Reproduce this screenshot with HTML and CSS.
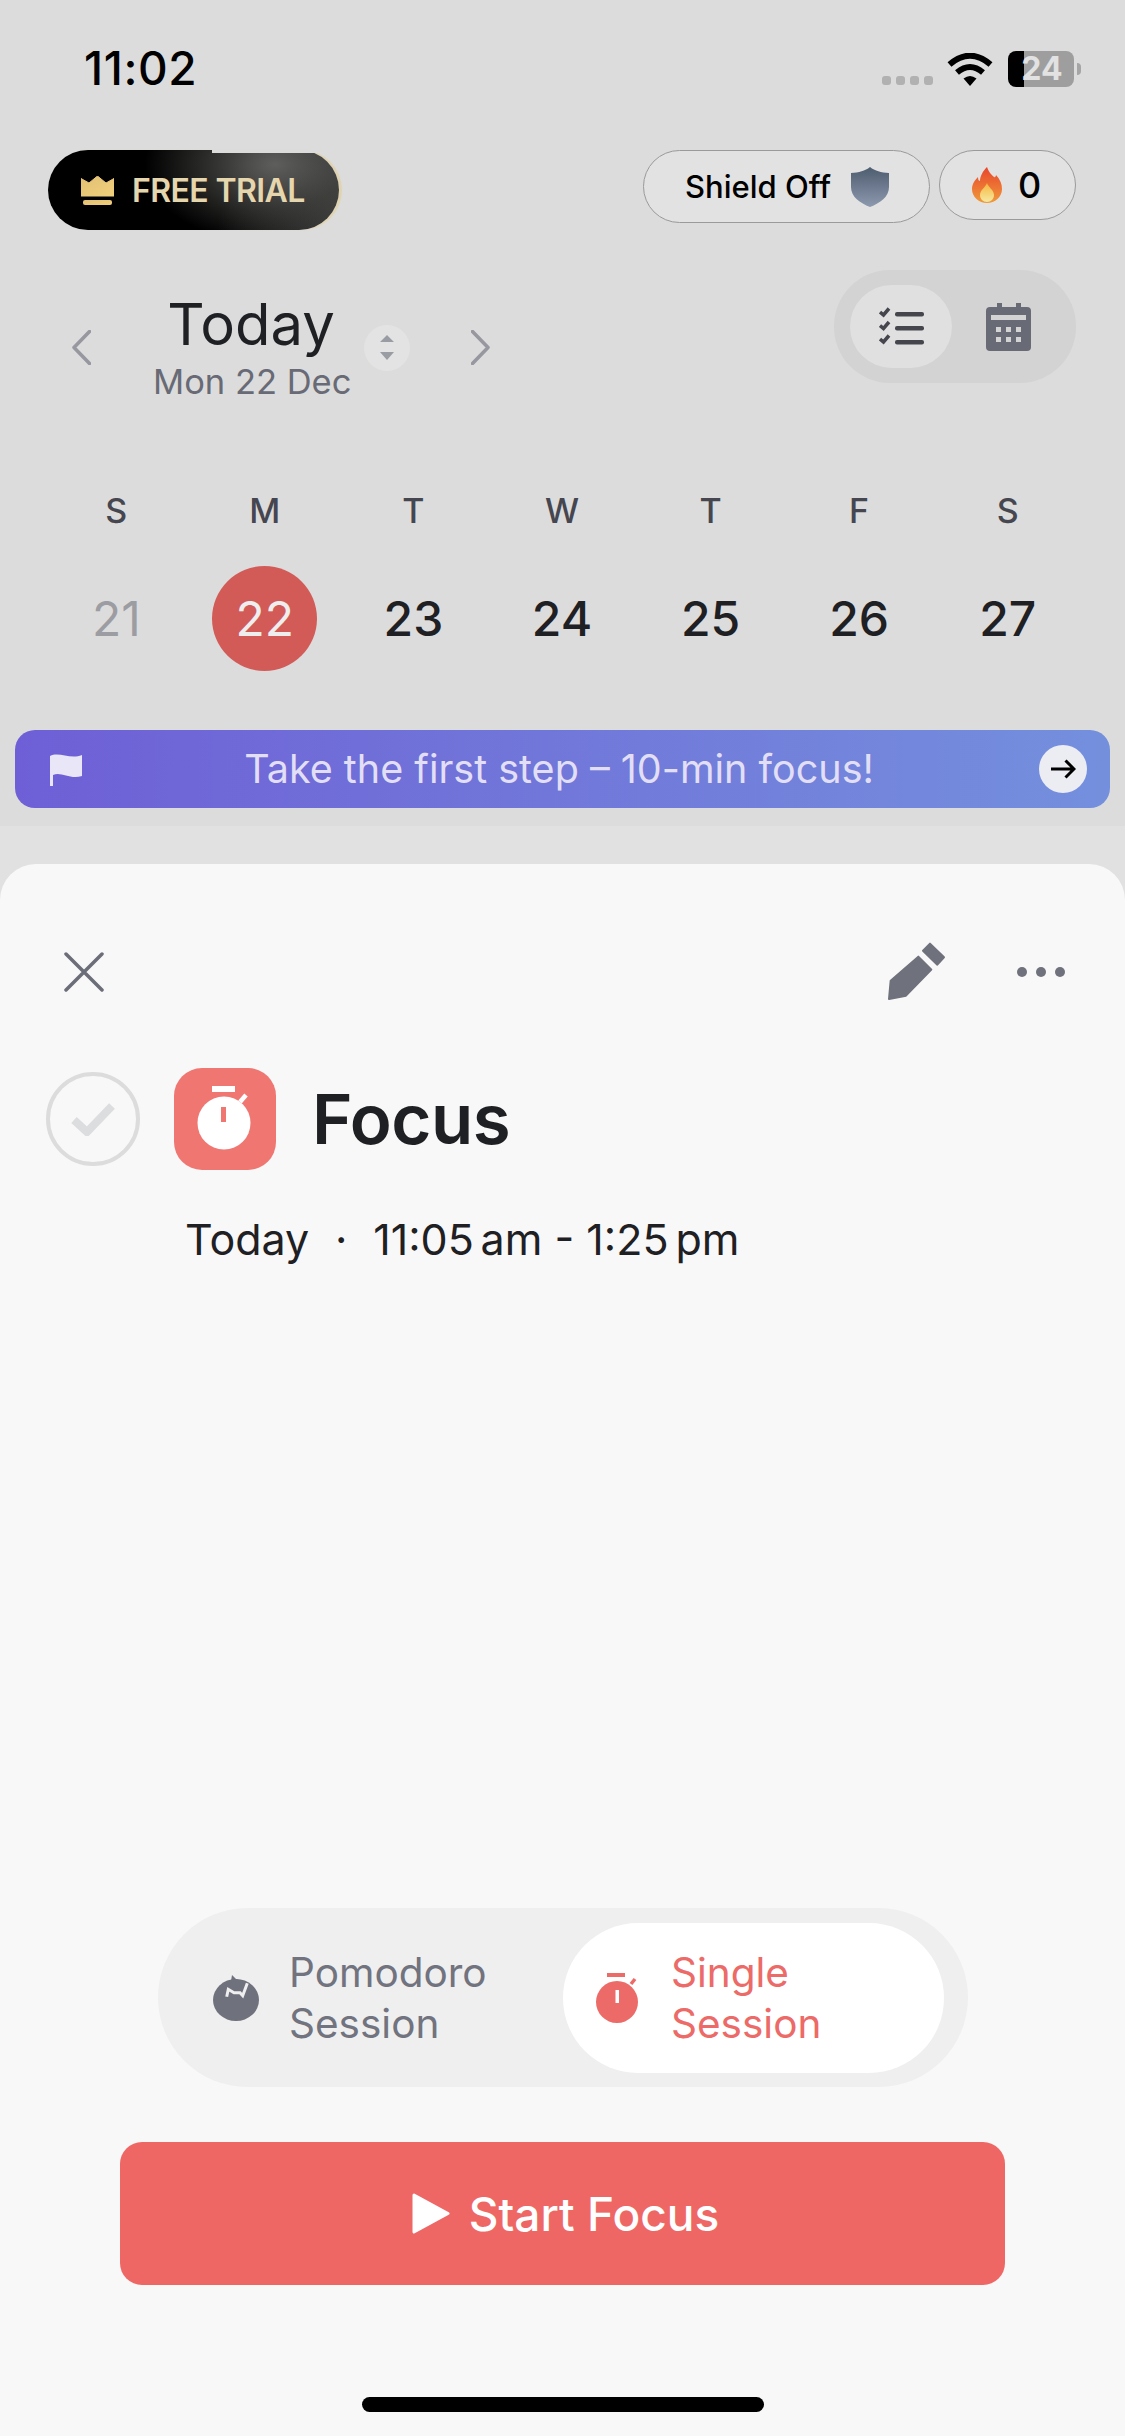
FILE: index.html
```html
<!DOCTYPE html>
<html lang="en">
<head>
    <meta charset="UTF-8">
    <title>Focus</title>
    <link rel="stylesheet" href="styles.css">
</head>
<body>
    <div class="screen">
        <!-- Dimmed calendar behind the sheet -->
        <header class="backdrop">
            <div class="status-bar">
                <span class="clock">11:02</span>
                <div class="status-icons">
                    <div class="signal"><i></i><i></i><i></i><i></i></div>
                    <svg class="wifi" width="46" height="33" viewBox="0 0 46 33"><path d="M2.5 11.5Q23-6 43.5 11.5" fill="none" stroke="#000" stroke-width="6"/><path d="M10 19.5Q23 8.500 36 19.500" fill="none" stroke="#000" stroke-width="6"/><path d="M16.500 25.500Q23 20.500 29.500 25.500L23 33Z" fill="#000"/></svg>
                    <div class="battery">24</div>
                    <div class="battery-nub"></div>
                </div>
            </div>

            <div class="pill-row">
                <div class="trial-pill">
                    <svg width="33" height="29" viewBox="0 0 33 29"><defs><linearGradient id="gold" x1="0" y1="0" x2="1" y2="1"><stop offset="0" stop-color="#e2c074"/><stop offset="1" stop-color="#f0cf7c"/></linearGradient></defs><path d="M0 2.500 8 7 16.500 0 25 7 33 2.500V20H0Z" fill="url(#gold)" stroke="url(#gold)" stroke-linejoin="round"/><rect x="2" y="24" width="29" height="5" rx="2" fill="url(#gold)"/></svg>
                    <span>FREE TRIAL</span>
                </div>
                <div class="pill-group">
                    <div class="outline-pill shield-pill">
                        <span>Shield Off</span>
                        <svg width="38" height="40" viewBox="0 0 38 40"><defs><linearGradient id="steel" x1="0" y1="0" x2="0" y2="1"><stop offset="0" stop-color="#4e5c70"/><stop offset="1" stop-color="#8d99ae"/></linearGradient></defs><path d="M19 0C24 4 30 5.500 38 6V20C38 30 29 36 19 40 9 36 0 30 0 20V6C8 5.500 14 4 19 0Z" fill="url(#steel)"/></svg>
                    </div>
                    <div class="outline-pill streak-pill">
                        <svg width="30" height="36" viewBox="0 0 30 36"><defs><linearGradient id="flame" x1="0" y1="0" x2="0" y2="1"><stop offset="0" stop-color="#e8452c"/><stop offset="1" stop-color="#f09a3a"/></linearGradient><linearGradient id="flame-core" x1="0" y1="0" x2="0" y2="1"><stop offset="0" stop-color="#f6b63f"/><stop offset="1" stop-color="#f6e9a0"/></linearGradient></defs><path d="M15 0C17 6 20 8 22 10 23 11 24 9 24 8 28 12 30 17 30 22 30 30 23 36 15 36 7 36 0 30 0 22 0 17 3 13 6 10 6 13 7 14 8 14 8 9 11 4 15 0Z" fill="url(#flame)"/><path d="M15 16C16 20 22 23 22 28 22 32 19 35 15 35 11 35 8 32 8 28 8 23 13 21 15 16Z" fill="url(#flame-core)"/></svg>
                        <span>0</span>
                    </div>
                </div>
            </div>

            <div class="nav-row">
                <div class="date-nav">
                    <svg class="chevron" width="19" height="35" viewBox="0 0 19 35"><path d="M17.500 1.500 2 17.500 17.500 33.500" fill="none" stroke="#96979f" stroke-width="3.500" stroke-linecap="round" stroke-linejoin="round"/></svg>
                    <div class="date-title">
                        <div class="date-today">Today</div>
                        <div class="date-sub">Mon 22 Dec</div>
                    </div>
                    <div class="updown">
                        <svg width="14" height="26" viewBox="0 0 14 26"><path d="M7 0 14 7H0ZM0 17H14L7 25Z" fill="#9a9ca3"/></svg>
                    </div>
                    <svg class="chevron chevron-next" width="19" height="35" viewBox="0 0 19 35"><path d="M1.500 1.500 17 17.500 1.500 33.500" fill="none" stroke="#96979f" stroke-width="3.500" stroke-linecap="round" stroke-linejoin="round"/></svg>
                </div>
                <div class="view-toggle">
                    <div class="view-btn active">
                        <svg width="45" height="40" viewBox="0 0 45 40"><g fill="none" stroke="#45464d" stroke-width="3.500"><path d="M1 5 4.500 8 10 1.500M1 18.500 4.500 21.500 10 15M1 32 4.500 35 10 28.500"/></g><g fill="#45464d"><rect x="16" y="5" width="29" height="4.500" rx="2"/><rect x="16" y="19" width="29" height="4.500" rx="2"/><rect x="16" y="33" width="29" height="4.500" rx="2"/></g></svg>
                    </div>
                    <div class="view-btn">
                        <svg width="45" height="48" viewBox="0 0 45 48"><rect x="0" y="4" width="45" height="44" rx="4" fill="#686a75"/><rect x="11" y="0" width="5" height="7" fill="#686a75"/><rect x="30" y="0" width="5" height="7" fill="#686a75"/><g fill="#d3d3d3"><rect x="5" y="12" width="35" height="5"/><rect x="10" y="24" width="5" height="5"/><rect x="20" y="24" width="5" height="5"/><rect x="30" y="24" width="5" height="5"/><rect x="10" y="34" width="5" height="5"/><rect x="20" y="34" width="5" height="5"/><rect x="30" y="34" width="5" height="5"/></g></svg>
                    </div>
                </div>
            </div>

            <div class="week">
                <div class="weekday">S</div><div class="weekday">M</div><div class="weekday">T</div><div class="weekday">W</div><div class="weekday">T</div><div class="weekday">F</div><div class="weekday">S</div>
                <div class="day past"><span>21</span></div>
                <div class="day selected"><span>22</span></div>
                <div class="day"><span>23</span></div>
                <div class="day"><span>24</span></div>
                <div class="day"><span>25</span></div>
                <div class="day"><span>26</span></div>
                <div class="day"><span>27</span></div>
            </div>

            <div class="banner">
                <svg width="32" height="33" viewBox="0 0 32 33"><path d="M0 3C9-2 20 7 32 2V23C20 27 11 18 3 22V33H0Z" fill="#e8e6f7"/></svg>
                <span>Take the first step – 10-min focus!</span>
                <div class="banner-arrow">
                    <svg width="26" height="20" viewBox="0 0 26 20"><path d="M1 10H24M15.500 1.500 24 10 15.500 18.500" fill="none" stroke="#000" stroke-width="3"/></svg>
                </div>
            </div>
        </header>

        <!-- Task sheet -->
        <section class="sheet">
            <div class="sheet-head">
                <svg width="40" height="40" viewBox="0 0 40 40"><path d="M2 2 38 38M38 2 2 38" stroke="#6b6d78" stroke-width="3.500" stroke-linecap="round"/></svg>
                <div class="sheet-actions">
                    <svg class="pencil" width="64" height="64" viewBox="105 115 192 192"><g fill="#6f717c" stroke="#6f717c" stroke-width="6" stroke-linejoin="round"><path d="M205 168 244 207 168 285 117 295 122 240Z"/><path d="M240 129 282 170 262 192 219 150Z"/></g></svg>
                    <div class="more-dots"><i></i><i></i><i></i></div>
                </div>
            </div>

            <div class="task-title">
                <div class="check-circle">
                    <svg width="46" height="34" viewBox="0 0 46 34"><path d="M4 18 17 30 42 4" fill="none" stroke="#dcdddf" stroke-width="8"/></svg>
                </div>
                <div class="task-icon">
                    <svg width="102" height="102" viewBox="0 0 102 102"><rect x="38" y="18" width="23" height="6" fill="#fff"/><circle cx="50" cy="55" r="26.500" fill="#fff"/><path d="M66 34 72 27" stroke="#fff" stroke-width="4.500"/><rect x="47" y="39" width="5" height="15" fill="#f07672"/></svg>
                </div>
                <h1>Focus</h1>
            </div>

            <div class="task-time">
                <span>Today</span>
                <span class="sep">·</span>
                <span>11:05<span class="thin"> </span>am - 1:25<span class="thin"> </span>pm</span>
            </div>

            <div class="sheet-spacer"></div>

            <div class="mode-switch">
                <div class="mode pomodoro">
                    <svg width="48" height="47" viewBox="0 0 48 47"><path d="M19 6 20 0 24 4 33 7 29 12Z" fill="#6f717c"/><ellipse cx="24" cy="25" rx="23" ry="21" fill="#6f717c"/><path d="M14.700 21.700 16.300 14.300 22 17.700 28 17.700 30.700 20.700 35.300 8.300" fill="none" stroke="#efefef" stroke-width="3"/></svg>
                    <span>Pomodoro<br>Session</span>
                </div>
                <div class="mode single">
                    <svg width="42" height="50" viewBox="0 0 42 50"><rect x="11" y="0" width="18" height="4" fill="#ec6a67"/><circle cx="21" cy="29" r="21" fill="#ec6a67"/><path d="M35 11 39 6" stroke="#ec6a67" stroke-width="3.500"/><rect x="19.500" y="17" width="3.500" height="13" fill="#fff"/></svg>
                    <span>Single<br>Session</span>
                </div>
            </div>

            <button class="start-btn">
                <svg width="38" height="41" viewBox="0 0 38 41"><path d="M2 2 36 20.500 2 39Z" fill="#fff" stroke="#fff" stroke-width="3" stroke-linejoin="round"/></svg>
                <span>Start Focus</span>
            </button>

            <div class="home-bar"></div>
        </section>
    </div>
</body>
</html>
```

FILE: styles.css
```css
* { margin: 0; padding: 0; box-sizing: border-box; font-family: 'Inter', 'Liberation Sans', sans-serif; }
body { background: #f8f8f8; }
svg { display: block; flex-shrink: 0; }
.screen { width: 1125px; height: 2436px; display: flex; flex-direction: column; overflow: hidden; background: linear-gradient(#dcdcdc 826px, #e1e1e1 826px); }

/* Status bar */
.backdrop { height: 828px; }
.status-bar { height: 150px; padding: 47px 44px 0 84px; display: flex; justify-content: space-between; align-items: flex-start; }
.clock { font-size: 46px; line-height: 42px; font-weight: 500; color: #000; letter-spacing: 0.6px; }
.status-icons { display: flex; align-items: flex-start; padding-top: 4px; }
.signal { display: flex; gap: 5px; margin: 25px 14px 0 0; }
.signal i { width: 9px; height: 9px; border-radius: 3px; background: #b1b1b1; }
.wifi { margin-right: 15px; margin-top: 2px; }
.battery { width: 66px; height: 36px; border-radius: 8px; background: linear-gradient(90deg, #000 16px, #9e9e9e 16px); color: #e2e2e2; font-size: 32px; font-weight: 700; line-height: 36px; text-align: center; padding-left: 2px; }
.battery-nub { width: 4px; height: 12px; margin: 12px 0 0 3px; border-radius: 0 4px 4px 0; background: #a5a5a5; }

/* Top pills */
.pill-row { display: flex; justify-content: space-between; align-items: flex-start; padding: 0 49px 0 48px; }
.trial-pill { position: relative; width: 291px; height: 80px; border-radius: 40px; display: flex; align-items: center; gap: 18px; padding-left: 33px; background: radial-gradient(ellipse 130px 80px at 78% 18%, #5e5e5c, rgba(70, 70, 68, 0.6) 55%, rgba(0, 0, 0, 0)), linear-gradient(100deg, #000 60%, #3c3c3c); box-shadow: 3px 0 1px #e0d3b0; }
.trial-pill::before { content: ''; position: absolute; top: 0; left: 164px; right: 20px; height: 3px; background: #dcdcdc; }
.trial-pill span { font-size: 32px; font-weight: 600; color: #e6d6ad; letter-spacing: -0.6px; }
.pill-group { display: flex; gap: 9px; align-items: flex-start; }
.outline-pill { display: flex; align-items: center; border: 1.500px solid #9a9a9a; border-radius: 40px; background: #e2e2e2; color: #000; font-weight: 500; }
.shield-pill { width: 287px; height: 73px; padding-left: 41px; gap: 20px; font-size: 31px; }
.streak-pill { width: 137px; height: 70px; padding-left: 32px; gap: 16px; font-size: 36px; }

/* Date nav and view toggle */
.nav-row { display: flex; justify-content: space-between; align-items: flex-start; padding: 40px 49px 0 72px; }
.date-nav { display: flex; align-items: center; padding-top: 21px; }
.date-title { width: 196px; margin-left: 62px; text-align: center; }
.date-today { font-size: 58px; line-height: 66px; color: #1f2023; white-space: nowrap; }
.date-sub { margin-top: 2px; font-size: 34.500px; line-height: 45px; color: #686a75; white-space: nowrap; }
.updown { width: 46px; height: 46px; margin-left: 15px; border-radius: 50%; background: #e3e3e3; display: flex; align-items: center; justify-content: center; }
.chevron-next { margin-left: 61px; }
.view-toggle { width: 242px; height: 113px; padding: 15px 12px 15px 16px; border-radius: 56px; background: #d3d3d3; display: flex; }
.view-btn { width: 102px; height: 83px; border-radius: 42px; display: flex; align-items: center; justify-content: center; }
.view-btn + .view-btn { width: 112px; }
.view-btn.active { background: #e0e0e0; }

/* Week */
.week { display: grid; grid-template-columns: repeat(7, 1fr); padding: 87px 43px 0 42px; }
.weekday { height: 40px; line-height: 40px; margin-bottom: 35px; text-align: center; font-size: 34px; font-weight: 500; color: #45464f; }
.day { height: 105px; display: flex; justify-content: center; }
.day span { width: 105px; height: 105px; border-radius: 50%; display: flex; align-items: center; justify-content: center; font-size: 48px; font-weight: 500; color: #1f2023; }
.day.past span { color: #9c9da3; font-weight: 400; }
.day.selected span { background: #d25b58; color: #eee; font-weight: 400; }

/* Banner */
.banner { height: 78px; margin: 59px 15px 0; padding: 0 23px 0 35px; border-radius: 20px; display: flex; align-items: center; justify-content: space-between; background: linear-gradient(90deg, #6e5fd6, #7490dd); color: #e2dff5; font-size: 39.500px; }
.banner span { margin-left: -3px; }
.banner-arrow { width: 48px; height: 48px; border-radius: 50%; background: #ecedf3; display: flex; align-items: center; justify-content: center; }

/* Sheet */
.sheet { flex: 1; margin-top: 36px; border-radius: 36px 36px 0 0; background: #f8f8f8; display: flex; flex-direction: column; }
.sheet-head { height: 138px; padding: 78px 60px 0 64px; display: flex; justify-content: space-between; align-items: center; }
.sheet-actions { display: flex; align-items: center; gap: 68px; }
.pencil { margin-top: -2px; }
.more-dots { display: flex; gap: 9px; }
.more-dots i { width: 10px; height: 10px; border-radius: 50%; background: #6f717c; }
.task-title { display: flex; align-items: center; margin-top: 66px; padding-left: 46px; }
.check-circle { width: 94px; height: 94px; border: 4px solid #dcdcdc; border-radius: 50%; display: flex; align-items: center; justify-content: center; }
.task-icon { width: 102px; height: 102px; margin-left: 34px; border-radius: 28px; background: #f07672; }
.task-title h1 { margin-left: 36px; font-size: 69px; font-weight: 600; letter-spacing: -0.5px; color: #1f2023; }
.task-time { display: flex; margin: 44px 0 0 185px; font-size: 43px; line-height: 50px; color: #1f2023; }
.task-time .sep { width: 64px; text-align: center; }
.task-time .thin { font-size: 24px; }
.sheet-spacer { flex: 1; }
.mode-switch { width: 810px; height: 179px; margin: 0 0 55px 158px; padding: 15px 24px 14px 0; border-radius: 90px; background: #efefef; display: flex; align-items: center; justify-content: space-between; }
.mode { display: flex; align-items: center; font-size: 40.500px; line-height: 51px; }
.pomodoro { padding-left: 54px; gap: 29px; color: #71737f; }
.single { width: 381px; height: 150px; padding-left: 33px; gap: 33px; border-radius: 75px; background: #fff; color: #ec6a67; }
.start-btn { width: 885px; height: 143px; margin-left: 120px; padding-left: 6px; border: none; border-radius: 22px; background: #ef6765; color: #fff; display: flex; align-items: center; justify-content: center; gap: 19px; font-size: 46px; font-weight: 500; }
.home-bar { width: 402px; height: 15px; margin: 112px 0 24px 362px; border-radius: 8px; background: #000; }
```
